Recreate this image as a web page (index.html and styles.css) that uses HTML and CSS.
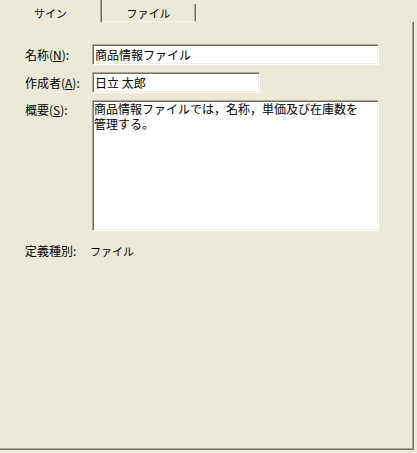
FILE: index.html
```html
<!DOCTYPE html>
<html lang="ja">
<head>
    <meta charset="UTF-8">
    <meta name="viewport" content="width=device-width, initial-scale=1.0">
    <title>プロパティ</title>
    <link rel="stylesheet" href="styles.css">
</head>
<body>
    <div class="tabs">
        <div class="tab active">サイン</div>
        <div class="tab">ファイル</div>
        <div class="tab-rest"></div>
    </div>
    <div class="panel">
        <form class="form">
            <label class="label" for="name">名称(<u>N</u>):</label>
            <input class="field wide" type="text" id="name" value="商品情報ファイル">

            <label class="label" for="author">作成者(<u>A</u>):</label>
            <input class="field short" type="text" id="author" value="日立 太郎">

            <label class="label top" for="summary">概要(<u>S</u>):</label>
            <textarea class="field wide memo" id="summary">商品情報ファイルでは，名称，単価及び在庫数を
管理する。</textarea>

            <div class="label kind">定義種別:</div>
            <div class="value kind">ファイル</div>
        </form>
    </div>
</body>
</html>
```

FILE: styles.css
```css
body {
    margin: 0;
    background: #ece9d8;
    font-family: "Noto Sans CJK JP", "MS UI Gothic", sans-serif;
    font-size: 12px;
    color: #000;
    width: 417px;
    height: 453px;
}
.tabs {
    display: flex;
    height: 22px;
}
.tab {
    box-sizing: border-box;
    width: 94px;
    height: 18px;
    margin-top: 4px;
    text-align: center;
    line-height: 18px;
    border-right: 1px solid #716f64;
    box-shadow: inset -1px 0 #aca899;
    border-bottom: 1px dotted #fff;
    font-size: 11px;
}
.tab.active {
    width: 102px;
    height: 22px;
    margin-top: 0;
    line-height: 26px;
    border-bottom: none;
}
.tab-rest {
    flex: 1;
}
.panel {
    box-sizing: border-box;
    width: 414px;
    height: 428px;
    border-right: 1px solid #716f64;
    border-bottom: 1px solid #716f64;
    box-shadow: inset -1px -1px #aca899;
    padding: 22px 0 0 25px;
}
.form {
    display: grid;
    grid-template-columns: 67px 287px;
    row-gap: 7px;
    align-items: center;
}
.label {
    white-space: nowrap;
}
.label.top {
    align-self: start;
    padding-top: 1px;
}
.field {
    box-sizing: border-box;
    height: 21px;
    padding: 0 2px;
    margin: 0;
    font-family: inherit;
    font-size: 12px;
    color: #000;
    background: #fff;
    border: 1px solid;
    border-color: #aca899 #fff #fff #aca899;
    box-shadow: inset 1px 1px #716f64, inset -1px -1px #f1efe2;
    outline: none;
}
.wide {
    width: 287px;
}
.short {
    width: 168px;
}
.memo {
    height: 131px;
    resize: none;
    overflow: hidden;
    line-height: 15px;
    padding: 0 1px;
}
.kind {
    margin-top: 4px;
}
.value {
    font-size: 11px;
    margin-left: -2px;
}
```
